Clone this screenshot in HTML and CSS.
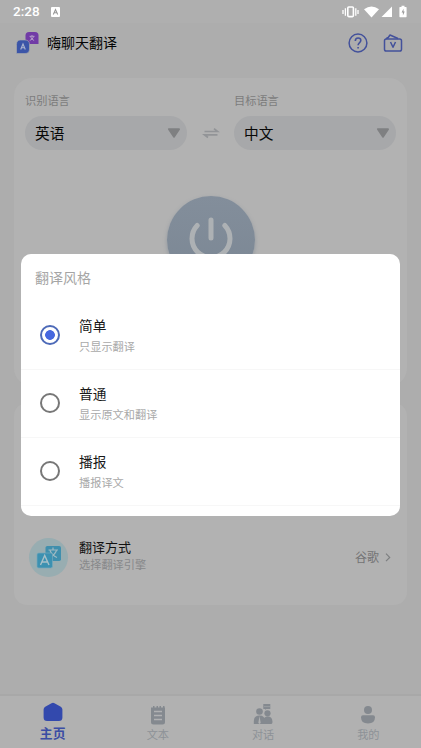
FILE: index.html
```html
<!DOCTYPE html>
<html lang="zh-CN">
<head>
<meta charset="utf-8">
<title>嗨聊天翻译</title>
<link rel="stylesheet" href="styles.css">
</head>
<body>
<div class="screen">
  <div class="status">
    <span class="time">2:28</span>
    <svg class="notif" width="9" height="10" viewBox="0 0 9 10"><rect width="9" height="10" rx="1" fill="#fff"/><path d="M2.3 7.5 4.5 2.5 6.7 7.5M3.2 5.800h2.600" fill="none" stroke="#999" stroke-width="1.1"/></svg>
    <svg class="sys" width="66" height="14" viewBox="0 0 66 14">
      <g fill="none" stroke="#fff"><rect x="5.800" y="2" width="5.600" height="9.600" rx="1" stroke-width="1.600"/><path d="M3.400 3.200v7.600M13.800 3.200v7.600M1 5v4M16 5v4" stroke-width="1.300"/></g>
      <path d="M22 4.200Q29.500-1.400 37 4.200L29.500 12.500Z" fill="#fff"/><path d="M50 1.500v10.500H39.500Z" fill="#fff"/>
      <path d="M58 2h1.500V.8h3V2H64q.6 0 .6.600v9q0 .6-.6.600h-6q-.6 0-.6-.6v-9Q57.400 2 58 2Z" fill="#fff"/><path d="M61.500 3.800 59.600 7.400h1.300v3L62.700 6.500h-1.200Z" fill="#999"/>
    </svg>
  </div>
  <header class="header">
    <svg width="23" height="22" viewBox="0 0 23 22">
      <path d="M13 0h6q3.500 0 3.500 3.500V12H13q-3.500 0-3.500-3.500v-5Q9.500 0 13 0Z" fill="#713ba6"/>
      <path d="M4.500 8H9q4.500 0 4.500 4.500v4.500q0 4.500-4.500 4.500H.5V12.500Q.5 8 4.500 8Z" fill="#3b55a8" stroke="#adadad" stroke-width=".6"/>
      <path d="M13.500 4.300h5M16 3v1.300M14.500 4.500q1 3 3.600 4M17.700 4.500q-1 3-4 4" fill="none" stroke="#b9a5cb" stroke-width=".9"/>
      <path d="M4.700 17.500 7 12l2.300 5.500M5.500 15.800h3" fill="none" stroke="#adb5ce" stroke-width="1.100"/>
    </svg>
    <h1>嗨聊天翻译</h1>
    <svg class="help" width="20" height="20" viewBox="0 0 20 20" fill="none" stroke="#43519b" stroke-width="1.500"><circle cx="10" cy="10" r="8.900"/><path d="M7.300 8q0-3 2.800-3t2.700 2.500c0 2-2.700 2.200-2.700 4.800" stroke-width="1.600"/><path d="M10.100 14v1.500" stroke-width="1.600"/></svg>
    <svg width="20" height="20" viewBox="0 0 20 20" fill="none" stroke="#43519b" stroke-width="1.500" stroke-linejoin="round"><rect x="1.500" y="6" width="17" height="12" rx="1.800"/><path d="M3 6 4.500 4.500M4.500 5.500 7 2l8 3.500"/><path d="m7.500 9 2.500 5.300L12.500 9"/></svg>
  </header>

  <main>
    <section class="card top">
      <div class="languages">
        <div class="language"><label>识别语言</label><div class="select">英语<svg width="14" height="10" viewBox="0 0 14 10"><path d="M2 1.200h10L7 8.700Z" fill="#7f8082" stroke="#7f8082" stroke-width="2" stroke-linejoin="round"/></svg></div></div>
        <svg class="swap" width="14" height="10" viewBox="0 0 14 10" fill="none" stroke="#929497" stroke-width="1.700"><path d="M.5 3.500h13L10 .7M13.500 6.800H.5L4 9.500"/></svg>
        <div class="language"><label>目标语言</label><div class="select">中文<svg width="14" height="10" viewBox="0 0 14 10"><path d="M2 1.200h10L7 8.700Z" fill="#7f8082" stroke="#7f8082" stroke-width="2" stroke-linejoin="round"/></svg></div></div>
      </div>
      <div class="power"><svg width="44" height="48" viewBox="0 0 44 48" fill="none" stroke="#adb1b4" stroke-width="5" stroke-linecap="round"><path d="M22 4v18M8.200 9.500a19 19 0 1 0 27.600 0"/></svg></div>
    </section>
    <section class="card bottom">
      <div class="engine">
        <span class="engine-icon"><svg width="26" height="24" viewBox="0 0 26 24"><rect x="9.500" y="1" width="15.500" height="15" rx="1.800" fill="#408fad"/><path d="M12.500 5h9.500M17 2.500V5M14 5.500q2 5 7 7M20.500 5.500q-2 5-7 7" fill="none" stroke="#a0bac2" stroke-width="1.200"/><rect x="1" y="8" width="15.500" height="15" rx="1.800" fill="#3c91b1" stroke="#77a9bc" stroke-width=".7"/><path d="m4.500 20 4.200-9.500L13 20M6 17h5.400" fill="none" stroke="#a8c0c8" stroke-width="1.400"/></svg></span>
        <div class="engine-copy"><b>翻译方式</b><small>选择翻译引擎</small></div>
        <span class="engine-value">谷歌</span>
        <svg width="6" height="9" viewBox="0 0 6 9"><path d="m1 .7 3.700 3.700L1 8.200" fill="none" stroke="#7d7f80" stroke-width="1.200"/></svg>
      </div>
    </section>
  </main>

  <nav>
    <a class="active"><svg width="20" height="20" viewBox="0 0 20 20"><path d="M8.500 1.300Q10 .4 11.500 1.300L17.800 4.800Q19.400 5.700 19.400 7.500V15.500Q19.400 19 15.900 19H4.100Q.6 19 .6 15.500V7.500Q.6 5.700 2.200 4.800Z" fill="#3349ad"/></svg><span>主页</span></a>
    <a><svg width="20" height="20" viewBox="0 0 20 20"><path d="M3 2.500h2V1h1.500v1.500h2V1H10v1.500h1.500V1H13v1.500h2V1h1.500v1.500h.5V17q0 2.500-2.500 2.500h-9Q3 19.500 3 17Z" fill="#84898f"/><path d="M6 6.500h8M6 10.500h8M6 14.500h8" stroke="#b0b1b2" stroke-width="1.400"/></svg><span>文本</span></a>
    <a><svg width="20" height="20" viewBox="0 0 20 20" fill="#84898f"><circle cx="6.500" cy="6.500" r="3.300"/><path d="M.8 19v-3Q1 10.500 6.500 10.500T12 16v3Z"/><path d="m6.500 11-1.200 7 1.200 1 1.200-1Z" fill="#b0b1b2"/><circle cx="14.500" cy="8.300" r="3.100"/><path d="M10 19v-2.800q.4-4.700 4.800-4.700t4.600 4.700V17.500q0 1.500-1.500 1.500Z"/><path d="M10.300-.9h7v5h-4l-1 1v-1h-2Z"/><path d="M11.500 1.600h5" stroke="#b0b1b2" stroke-dasharray="1 1"/></svg><span>对话</span></a>
    <a><svg width="20" height="20" viewBox="0 0 20 20" fill="#84898f"><circle cx="10" cy="5" r="4"/><path d="M5 10.300h10q2 0 2 2 0 6.200-7 6.200t-7-6.200q0-2 2-2Z"/></svg><span>我的</span></a>
  </nav>

  <div class="dialog" role="dialog">
    <h2>翻译风格</h2>
    <div class="option"><i class="radio checked"></i><div><b>简单</b><small>只显示翻译</small></div></div>
    <div class="option"><i class="radio"></i><div><b>普通</b><small>显示原文和翻译</small></div></div>
    <div class="option"><i class="radio"></i><div><b>播报</b><small>播报译文</small></div></div>
  </div>
</div>
</body>
</html>
```
FILE: styles.css
```css
* { box-sizing: border-box; }
body { margin: 0; font-family: "Noto Sans CJK SC", sans-serif; color: #111; }
svg { display: block; flex: none; overflow: visible; }
b { display: block; font-weight: 400; }
small { display: block; }
.screen { position: relative; width: 421px; height: 748px; display: flex; flex-direction: column; background: #adadad; overflow: hidden; }

.status { height: 23px; flex: none; display: flex; align-items: center; padding: 0 13px; background: #afafaf; }
.time { font: 500 13.5px/23px Roboto, sans-serif; color: #fff; width: 38px; }
.sys { margin-left: auto; }
.header { height: 40px; flex: none; display: flex; align-items: center; padding: 0 18px 0 16px; }
.header h1 { margin: 0 auto 2px 8px; font-size: 14px; line-height: 20px; font-weight: 400; color: #050505; }
.help { margin-right: 15px; }

main { flex: 1; display: flex; flex-direction: column; gap: 17px; padding: 15px 14px 0; }
.card { background: #b2b2b2; border-radius: 18px; }
.top { height: 308px; padding: 13px 11px 0; }
.languages { display: flex; justify-content: space-between; }
.language { width: 162px; }
.language label { display: block; font-size: 11.2px; line-height: 18px; color: #7c7c7c; }
.select { height: 34px; margin-top: 7px; border-radius: 17px; background: #a7a8aa; padding: 0 6px 0 10px; display: flex; align-items: center; justify-content: space-between; font-size: 14.7px; line-height: 34px; color: #080808; }
.swap { margin-top: 37px; }
.power { width: 88px; height: 88px; margin: 46px auto 0; border-radius: 50%; background: linear-gradient(#838e9b, #7b8794); box-shadow: 0 2px 4px #8f969e; display: flex; justify-content: center; padding-top: 20px; }
.bottom { height: 202px; padding-top: 130px; border-radius: 13px; }
.engine { height: 48px; display: flex; align-items: center; padding: 0 16px 0 15px; }
.engine-icon { width: 39px; height: 39px; border-radius: 50%; background: #98adb1; display: flex; align-items: center; justify-content: center; }
.engine-copy { margin: -4px auto 0 11px; }
.engine-copy b { font-size: 13px; line-height: 18px; }
.engine-copy small { font-size: 11.2px; line-height: 17px; color: #88898b; }
.engine-value { margin-right: 6px; font-size: 12px; line-height: 18px; color: #727374; }

nav { height: 54px; flex: none; display: grid; grid-template-columns: repeat(4, 1fr); border-top: 2px solid #a8a8a8; background: #b1b1b1; }
nav a { display: flex; flex-direction: column; align-items: center; padding-top: 9px; color: #8d9297; font-size: 11.2px; line-height: 18px; }
nav span { margin-top: 0; }
nav .active { color: #3b4da4; font-size: 12.8px; font-weight: 700; padding-top: 6px; }
nav .active span { margin-top: 2px; }

.dialog { position: absolute; left: 21px; top: 254px; width: 379px; height: 262px; border-radius: 10px; background: #fff; }
.dialog h2 { margin: 0; height: 48px; padding-left: 14px; font-size: 14px; line-height: 47px; font-weight: 400; color: #a5a5a5; }
.option { height: 68px; display: flex; align-items: center; padding-left: 19px; border-bottom: 1px solid #f7f7f7; }
.option > div { margin-top: -2px; }
.radio { width: 20px; height: 20px; margin: -1px 19px 0 0; border: 2px solid #777; border-radius: 50%; }
.checked { border-color: #4d6ab8; background: radial-gradient(circle, #4768df 0 4.500px, transparent 5.200px); }
.option b { font-size: 13.7px; line-height: 22px; color: #181818; }
.option small { font-size: 11.2px; line-height: 20px; color: #a9a9a9; }
```
